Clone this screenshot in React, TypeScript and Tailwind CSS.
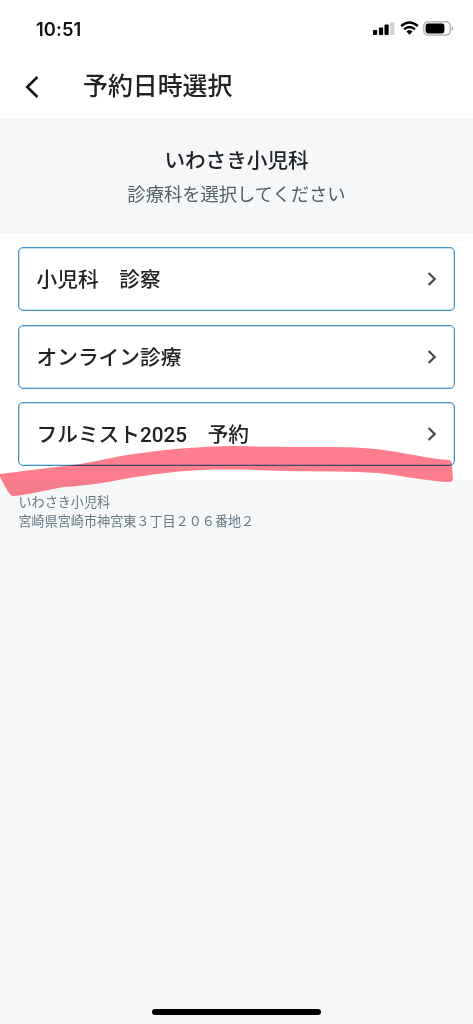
const departments = ['小児科　診察', 'オンライン診療', 'フルミスト2025　予約'];

function StatusBar() {
  return (
    <div className="flex h-[56px] items-center justify-between pr-[19px] pl-[36px]">
      <span className="pt-[1px] font-['Inter',sans-serif] text-[18.3px] leading-[20px] font-semibold tracking-[0.1px] text-[#111]">10:51</span>
      <div className="flex items-center">
        <svg width="22" height="14" viewBox="0 0 22 14">
          <rect x="0" y="9" width="4.2" height="5" rx="1" />
          <rect x="5.9" y="6.4" width="4.2" height="7.6" rx="1" />
          <rect x="11.5" y="3.6" width="4.2" height="10.4" rx="1" />
          <rect x="17.2" y="1" width="4.2" height="13" rx="1" fill="#d2d2d2" />
        </svg>
        <svg className="ml-[5px]" width="19" height="14" viewBox="0 0 19 14">
          <path d="M1.2 5.1Q9.5-2.1 17.8 5.1" fill="none" stroke="#000" strokeWidth="2.6" />
          <path d="M4.1 8.2Q9.5 3.7 14.9 8.2" fill="none" stroke="#000" strokeWidth="2.5" />
          <path d="M6.4 10.6Q9.5 8.1 12.6 10.6L9.5 13.7Z" />
        </svg>
        <svg className="ml-[4px]" width="31" height="15" viewBox="0 0 31 15">
          <rect x=".8" y=".8" width="26.4" height="13.4" rx="4" fill="none" stroke="#a9a9a9" strokeWidth="1.2" />
          <rect x="2.6" y="2.6" width="18.8" height="9.8" rx="2.4" />
          <path d="M28.8 5.3v4.4q1.6-.7 1.6-2.2t-1.6-2.2Z" fill="#a0a0a0" />
        </svg>
      </div>
    </div>
  );
}

function DepartmentButton({ label }: { label: string }) {
  return (
    <button className="flex h-[64px] w-full shrink-0 items-center justify-between rounded-[5px] border border-[#4393c6] bg-white pr-[17px] pl-[17.5px] text-left shadow-[inset_0_0_0_1px_#4393c64d]">
      <span className="pt-[2px] text-[20.7px] leading-[30px] font-medium text-[#202326]">{label}</span>
      <svg width="10" height="14" viewBox="0 0 10 14" fill="none" stroke="#484848" strokeWidth="2.2">
        <path d="M1.6 1 7.7 7 1.6 13" />
      </svg>
    </button>
  );
}

export default function App() {
  return (
    <div className="relative flex h-[1024px] w-[473px] flex-col overflow-hidden bg-[#f5f7f9] font-['Roboto','Noto_Sans_CJK_JP',sans-serif]">
      <header className="h-[119px] bg-white">
        <StatusBar />
        <div className="flex h-[62px] items-center pl-[25px]">
          <svg width="14" height="22" viewBox="0 0 14 22" fill="none" stroke="#111" strokeWidth="2.5">
            <path d="M12.4 1 2.2 11 12.4 21" />
          </svg>
          <h1 className="ml-[44px] text-[24.9px] leading-[36px] font-medium text-[#202326]">予約日時選択</h1>
        </div>
      </header>
      <section className="flex h-[114px] flex-col items-center pt-[27px]">
        <h2 className="text-[20.6px] leading-[30px] font-medium text-[#202326]">いわさき小児科</h2>
        <p className="mt-[5px] text-[18.3px] leading-[28px] text-[#506069]">診療科を選択してください</p>
      </section>
      <main className="flex h-[247px] flex-col gap-[13.6px] bg-white px-[18px] pt-[14px]">
        {departments.map((label) => (
          <DepartmentButton key={label} label={label} />
        ))}
      </main>
      <footer className="pt-[13px] pl-[18.5px] text-[13.1px] leading-[19px] text-[#657985]">
        <p>いわさき小児科</p>
        <p>宮崎県宮崎市神宮東３丁目２０６番地２</p>
      </footer>
      <svg className="pointer-events-none absolute top-[436px] left-0 mix-blend-multiply" width="473" height="70" viewBox="0 436 473 70">
        <path
          d="M0 474C25 471 55 467 80 464C105 460 116 456 142 453C170 449 205 446 235 446C265 447 290 447 325 447C355 447 375 448 397 452C415 455 432 459 449 460Q452 460 452 466L453 478Q453 482 449 482C425 481 405 476 378 473C350 471 320 472 285 471C260 470 230 469 203 470C178 471 158 474 135 477C115 481 85 486 64 487C45 490 28 495 14 496Q11 497 7 490L0 477Z"
          fill="#ff7e8d"
        />
      </svg>
      <div className="absolute bottom-[9px] left-[152px] h-[6px] w-[169px] rounded-full bg-black" />
    </div>
  );
}
